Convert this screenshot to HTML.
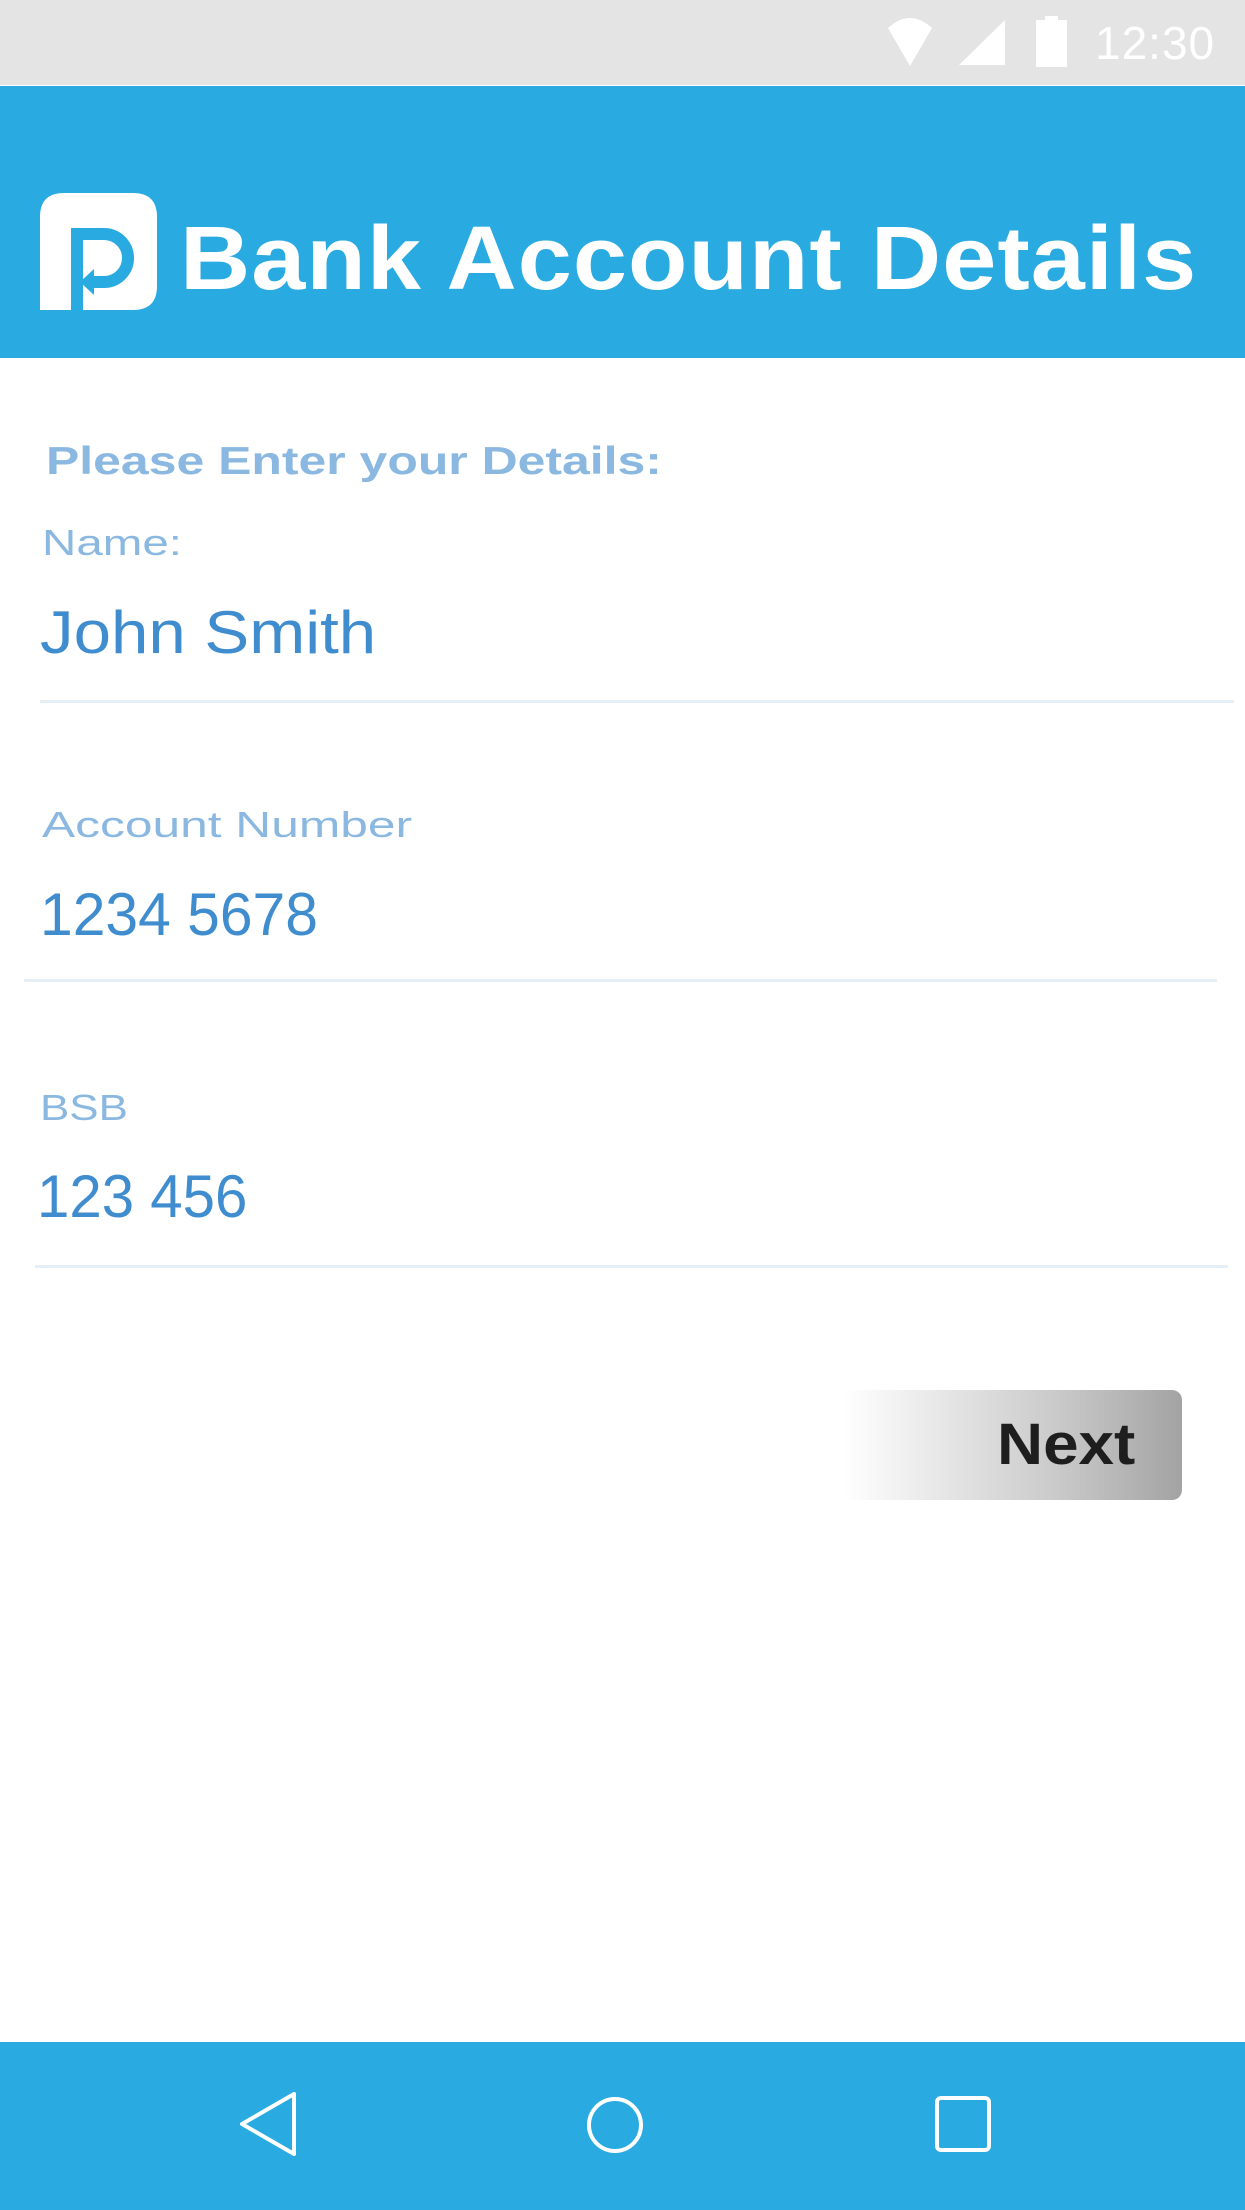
<!DOCTYPE html>
<html><head><meta charset="utf-8"><style>
html,body{margin:0;padding:0;}
body{width:1245px;height:2210px;position:relative;background:#fff;font-family:"Liberation Sans",sans-serif;overflow:hidden;}
.abs{position:absolute;transform-origin:0 0;}
.status{left:0;top:0;width:1245px;height:85px;background:#e4e4e4;}
.header{left:0;top:86px;width:1245px;height:272px;background:#29aae1;}
.title{left:180px;top:208px;font-size:90px;font-weight:bold;color:#fff;white-space:nowrap;letter-spacing:1px;transform:scaleX(1.08);}
.lbl{color:#8ab8e0;font-size:36px;white-space:nowrap;}
.val{color:#3f8ccf;font-size:60px;white-space:nowrap;}
.line{height:3px;background:#e6eef6;}
.nav{left:0;top:2042px;width:1245px;height:168px;background:#29aae1;}
</style></head><body>
<div class="abs status"></div>
<svg class="abs" style="left:880px;top:14px" width="200" height="60" viewBox="0 0 200 60">
<path d="M8 14 Q30 -6 52 14 L30 52 Z" fill="#fff"/>
<path d="M79 51 L125 6 L125 51 Z" fill="#fff"/>
<rect x="156" y="6" width="31" height="47" fill="#fff"/>
<rect x="165" y="2" width="13" height="5" fill="#fff"/>
</svg>
<div class="abs" style="left:1095px;top:16px;font-size:46px;color:#fff;letter-spacing:1px">12:30</div>
<div class="abs header"></div>
<svg class="abs" style="left:40px;top:193px" width="117" height="117" viewBox="0 0 117 117">
<path d="M0 116 V24 Q0 0 24 0 H93 Q117 0 117 24 V93 Q117 117 93 117 H0Z" fill="#fff"/>
<path d="M37 117 V41 H64 A24 24 0 0 1 64 89 H52" fill="none" stroke="#29aae1" stroke-width="12"/>
<path d="M40 89 L54 76 L54 102 Z" fill="#29aae1"/>
</svg>
<div class="abs title">Bank Account Details</div>
<div class="abs lbl" style="left:46px;top:440px;font-weight:bold;font-size:39px;transform:scaleX(1.28)">Please Enter your Details:</div>
<div class="abs lbl" style="left:42px;top:522px;transform:scaleX(1.32)">Name:</div>
<div class="abs val" style="left:40px;top:598px;transform:scaleX(1.12)">John Smith</div>
<div class="abs line" style="left:40px;top:700px;width:1194px"></div>
<div class="abs lbl" style="left:42px;top:804px;transform:scaleX(1.38)">Account Number</div>
<div class="abs val" style="left:40px;top:880px;transform:scaleX(0.98)">1234 5678</div>
<div class="abs line" style="left:24px;top:979px;width:1193px"></div>
<div class="abs lbl" style="left:40px;top:1087px;transform:scaleX(1.22)">BSB</div>
<div class="abs val" style="left:37px;top:1162px;transform:scaleX(0.97)">123 456</div>
<div class="abs line" style="left:35px;top:1265px;width:1193px"></div>
<div class="abs" style="left:843px;top:1390px;width:339px;height:110px;border-radius:0 10px 10px 0;background:linear-gradient(to right,#fff 0%,#e6e6e6 30%,#c8c8c8 65%,#a3a3a3 100%);"></div>
<div class="abs" style="left:997px;top:1411px;font-size:58px;font-weight:bold;color:#1e1e1e;transform:scaleX(1.1)">Next</div>
<div class="abs nav"></div>
<svg class="abs" style="left:0;top:2042px" width="1245" height="168" viewBox="0 0 1245 168">
<path d="M294 52 L242 82 L294 112 Z" fill="none" stroke="#fff" stroke-width="4" stroke-linejoin="round"/>
<circle cx="615" cy="83" r="26" fill="none" stroke="#fff" stroke-width="4"/>
<rect x="937" y="56" width="52" height="52" rx="4" fill="none" stroke="#fff" stroke-width="4"/>
</svg>
</body></html>
